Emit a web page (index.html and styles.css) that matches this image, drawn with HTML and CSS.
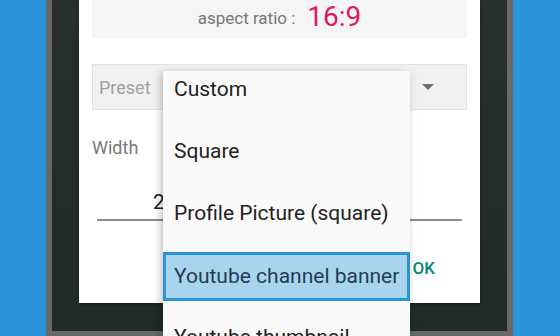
FILE: index.html
```html
<!DOCTYPE html>
<html lang="en">
<head>
  <meta charset="UTF-8">
  <title>Preset picker</title>
  <link rel="stylesheet" href="styles.css">
</head>
<body>
  <div class="device">
    <div class="dialog">
      <div class="ratio">
        <span class="ratio-label">aspect ratio :</span>
        <span class="ratio-value">16:9</span>
      </div>

      <div class="preset">
        <span class="preset-label">Preset</span>
        <span class="arrow"></span>
      </div>

      <div class="field-label">Width</div>
      <div class="field">
        <span class="field-value">2</span>
      </div>

      <div class="actions">
        <button class="ok">OK</button>
      </div>
    </div>
  </div>

  <div class="menu">
    <ul class="menu-list">
      <li class="menu-item">Custom</li>
      <li class="menu-item">Square</li>
      <li class="menu-item">Profile Picture (square)</li>
      <li class="menu-item active"><span>Youtube channel banner</span></li>
      <li class="menu-item">Youtube thumbnail</li>
    </ul>
  </div>
</body>
</html>
```

FILE: styles.css
```css
body {
  margin: 0;
  height: 336px;
  overflow: hidden;
  background: #2a93d9;
  font-family: Roboto, "Noto Sans", sans-serif;
}

.device {
  margin-left: 46px;
  width: 455px;
  height: 331px;
  border: 6px solid #686868;
  border-top: none;
  border-bottom-width: 5px;
  background: linear-gradient(180deg, #27302a, #1f2b28);
  display: flex;
  justify-content: center;
}

.dialog {
  width: 375px;
  height: 303px;
  padding: 0 13px;
  background: #fff;
  box-shadow: 0 1px 3px rgba(0, 0, 0, 0.4);
  display: flex;
  flex-direction: column;
}

.ratio {
  height: 33px;
  padding-bottom: 5px;
  background: #f5f5f5;
  display: flex;
  justify-content: center;
  align-items: center;
  gap: 12px;
}
.ratio-label {
  font-size: 17px;
  color: #777;
  padding-top: 2px;
}
.ratio-value {
  font-size: 28px;
  color: #e2175e;
}

.preset {
  margin-top: 26px;
  height: 44px;
  border: 1px solid #e2e2e2;
  background: #f1f1f1;
  display: flex;
  align-items: center;
  justify-content: space-between;
  padding: 0 32px 0 6px;
}
.preset-label {
  font-size: 18px;
  color: #a0a0a0;
}
.arrow {
  width: 0;
  height: 0;
  border-left: 6px solid transparent;
  border-right: 6px solid transparent;
  border-top: 6px solid #6f6f6f;
}

.field-label {
  margin-top: 28px;
  font-size: 18px;
  line-height: 20px;
  color: #7a7a7a;
}

.field {
  margin: 32px 5px 0 5px;
  height: 29px;
  border-bottom: 2px solid #8c8c8c;
  padding-left: 56px;
}
.field-value {
  font-size: 21px;
  line-height: 24px;
  color: #222;
}

.actions {
  margin-top: 37px;
  display: flex;
  justify-content: flex-end;
  padding-right: 32px;
}
.ok {
  border: none;
  background: none;
  padding: 0;
  font-family: inherit;
  font-size: 17px;
  font-weight: 500;
  color: #00897b;
}

.menu {
  position: absolute;
  left: 163px;
  top: 71px;
  width: 247px;
  height: 300px;
  background: #fafafa;
  box-shadow: -2px 2px 8px rgba(0, 0, 0, 0.25);
  overflow: hidden;
}
.menu-list {
  list-style: none;
  margin: -13px 0 0;
  padding: 0;
}
.menu-item {
  height: 62px;
  padding-left: 11px;
  display: flex;
  align-items: center;
  font-size: 21px;
  color: #222;
}
.menu-item.active {
  padding: 0;
}
.menu-item.active span {
  box-sizing: border-box;
  width: 100%;
  height: 49px;
  margin-top: 2px;
  padding-left: 8px;
  display: flex;
  align-items: center;
  border: 3px solid #2a93d9;
  background: #a9d4ee;
  color: #1e3d52;
}
```
